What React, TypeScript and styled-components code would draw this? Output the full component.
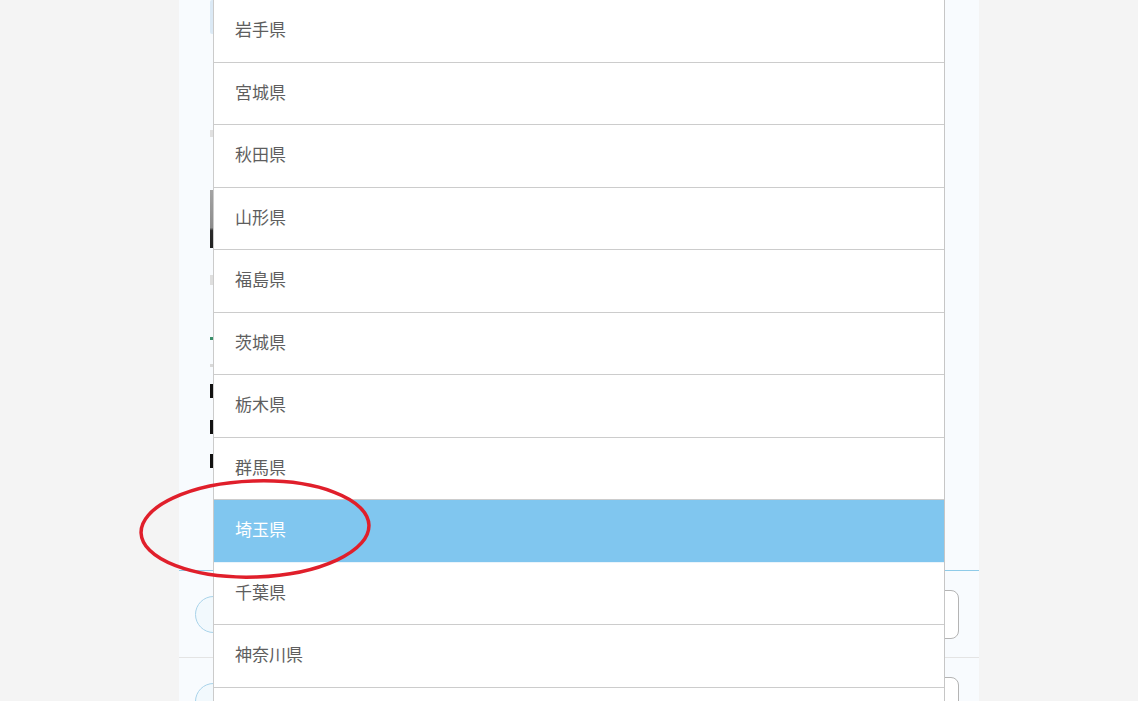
import React from "react";
import styled, { createGlobalStyle } from "styled-components";

const Global = createGlobalStyle`
  html, body { margin: 0; padding: 0; background: #f4f4f4; }
  body { font-family: "Noto Sans CJK JP", "Noto Sans", sans-serif; overflow: hidden; }
`;

const Page = styled.div`
  height: 701px;
  padding-left: 179px;
  background: #f4f4f4;
  overflow: hidden;
`;

const Panel = styled.div`
  position: relative;
  width: 800px;
  height: 701px;
  background: #f8fbfe;
  display: flex;
  flex-direction: column;
`;

const FormArea = styled.div`
  flex: 0 0 570px;
  padding-left: 31px;
  display: flex;
  flex-direction: column;
  overflow: hidden;
`;

const InputBox = styled.div`
  flex-shrink: 0;
  width: 300px;
  height: 34px;
  background: #dbe9f5;
  border-radius: 2px;
`;

const Mark = styled.div<{ $top: number; $h: number; $c: string }>`
  flex-shrink: 0;
  margin-top: ${(p) => p.$top}px;
  width: 3px;
  height: ${(p) => p.$h}px;
  background: ${(p) => p.$c};
`;

const Photo = styled.div`
  flex-shrink: 0;
  margin-top: 53px;
  width: 200px;
  height: 58px;
  background: linear-gradient(#a4a4a4 0%, #8c8c8c 65%, #2a2a2a 70%, #222 100%);
`;

const TextLine = styled.div<{ $top: number }>`
  flex-shrink: 0;
  margin-top: ${(p) => p.$top}px;
  width: 300px;
  height: 14px;
  background: #111;
`;

const Footer = styled.div`
  flex-shrink: 0;
  border-top: 1px solid #8fcbe8;
  display: flex;
  flex-direction: column;
`;

const ButtonRow = styled.div`
  height: 86px;
  padding: 0 20px 0 16px;
  display: flex;
  align-items: center;
  justify-content: space-between;
  border-bottom: 1px solid #e4e4e4;
`;

const PillButton = styled.div`
  width: 140px;
  height: 37px;
  border: 1px solid #a9d3ea;
  background: #f2f9fd;
  border-radius: 19px;
  box-sizing: border-box;
`;

const BoxButton = styled.div`
  width: 160px;
  height: 49px;
  border: 1px solid #b4b4b4;
  background: #fff;
  border-radius: 8px;
  box-sizing: border-box;
`;

const Dropdown = styled.div`
  position: absolute;
  left: 34px;
  top: 0;
  bottom: -40px;
  width: 732px;
  box-sizing: border-box;
  border-left: 1px solid #cbcbcb;
  border-right: 1px solid #c6c6c6;
  background: #fff;
`;

const Option = styled.div<{ $active?: boolean }>`
  height: 62.5px;
  box-sizing: border-box;
  border-bottom: 1px solid ${(p) => (p.$active ? "#eaf4fb" : "#cccccc")};
  padding: 0 0 4px 21px;
  display: flex;
  align-items: center;
  font-size: 17px;
  color: ${(p) => (p.$active ? "#ffffff" : "#5e5e5e")};
  background: ${(p) => (p.$active ? "#80c6ef" : "#ffffff")};
`;

const Annotation = styled.svg`
  position: absolute;
  left: 0;
  top: 0;
  pointer-events: none;
`;

const prefectures = [
  "岩手県",
  "宮城県",
  "秋田県",
  "山形県",
  "福島県",
  "茨城県",
  "栃木県",
  "群馬県",
  "埼玉県",
  "千葉県",
  "神奈川県",
];

export default function App() {
  return (
    <>
      <Global />
      <Page>
        <Panel>
          <FormArea>
            <InputBox />
            <Mark $top={96} $h={7} $c="#e0e0e0" />
            <Photo />
            <Mark $top={27} $h={10} $c="#dedede" />
            <Mark $top={52} $h={3} $c="#3a8f6a" />
            <Mark $top={24} $h={3} $c="#d8d8d8" />
            <TextLine $top={17} />
            <TextLine $top={22} />
            <TextLine $top={20} />
          </FormArea>
          <Footer>
            <ButtonRow>
              <PillButton />
              <BoxButton />
            </ButtonRow>
            <ButtonRow>
              <PillButton />
              <BoxButton />
            </ButtonRow>
          </Footer>
          <Dropdown>
            {prefectures.map((p) => (
              <Option key={p} $active={p === "埼玉県"}>
                {p}
              </Option>
            ))}
          </Dropdown>
        </Panel>
      </Page>
      <Annotation width="1138" height="701" viewBox="0 0 1138 701">
        <ellipse
          cx="255"
          cy="529"
          rx="114"
          ry="48"
          fill="none"
          stroke="#e01f2b"
          strokeWidth="3.5"
          transform="rotate(-2 255 529)"
        />
      </Annotation>
    </>
  );
}
